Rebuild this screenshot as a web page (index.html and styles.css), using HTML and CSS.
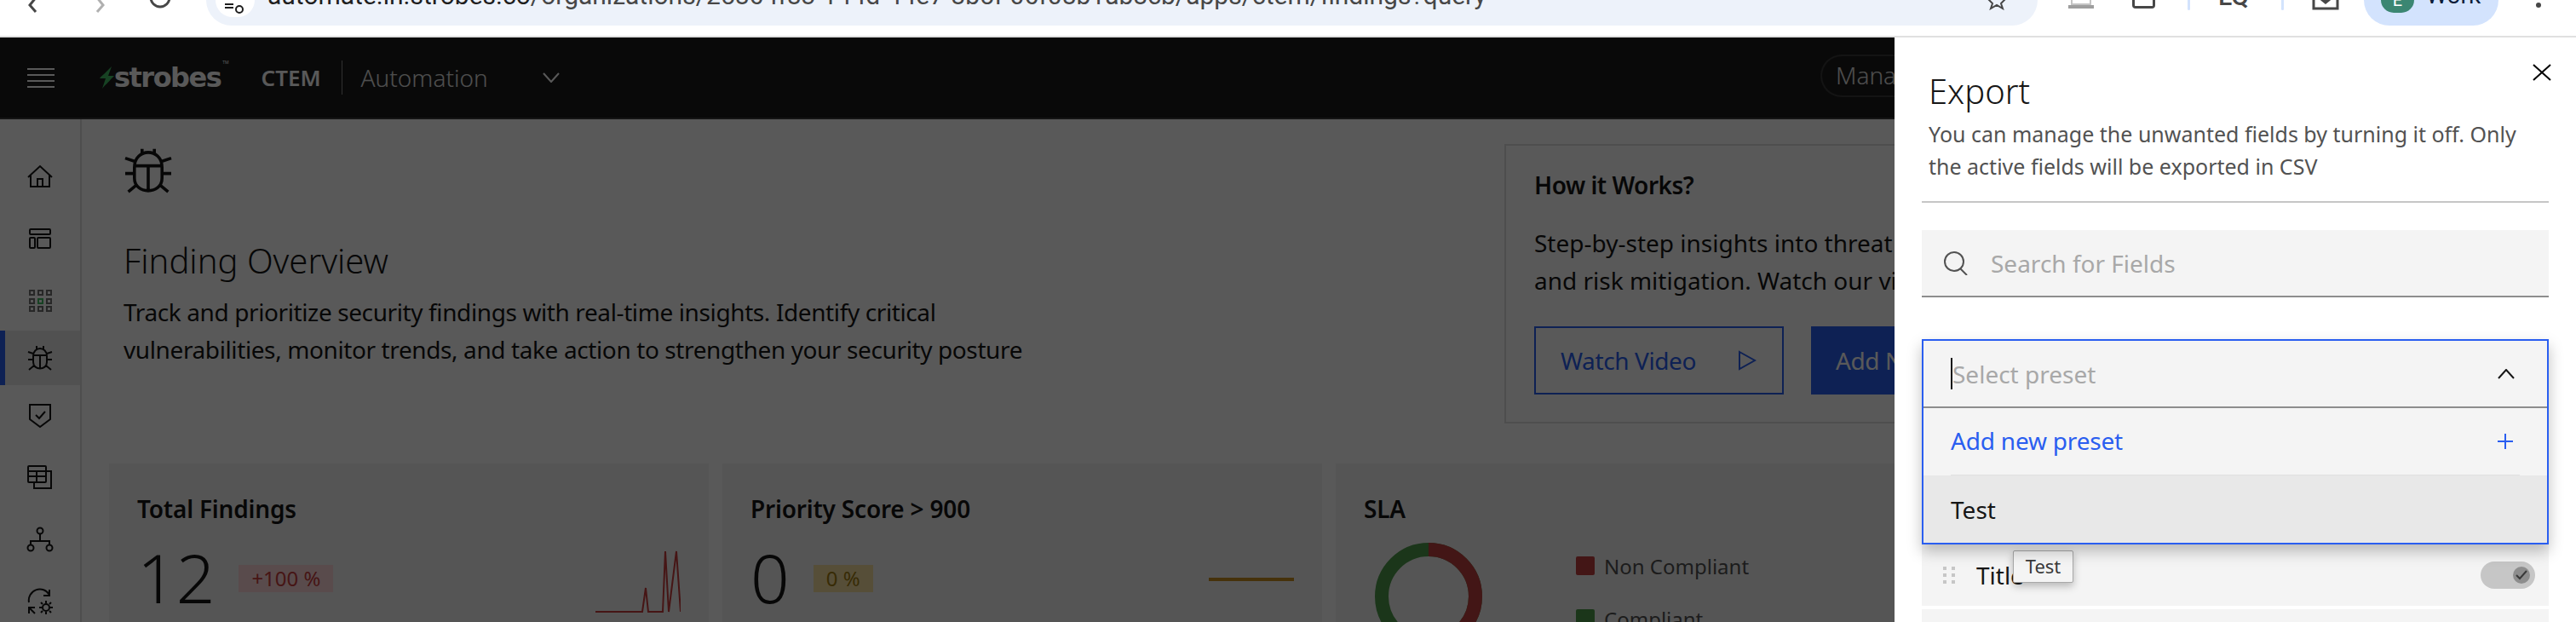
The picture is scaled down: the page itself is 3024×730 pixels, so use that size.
FILE: index.html
```html
<!DOCTYPE html>
<html lang="en">
<head>
  <meta charset="UTF-8" />
  <title>Finding Overview</title>
  <link rel="stylesheet" href="styles.css">
</head>
<body>

  <div class="chrome">
    <svg class="chrome-btn btn-back" width="24" height="20" viewBox="0 0 24 20"><path d="M16 -4 L8 6 L15 14" /></svg>
    <svg class="chrome-btn btn-fwd" width="24" height="20" viewBox="0 0 24 20"><path d="M8 -4 L16 6 L9 14" /></svg>
    <svg class="chrome-btn btn-reload" width="30" height="20" viewBox="0 0 30 20"><path d="M4 -3 A11 11 0 0 0 26 -3" /></svg>
    <div class="omnibox">
      <div class="site-info">
        <svg width="24" height="20" viewBox="0 0 24 20"><path d="M0 5 H10 M0 9 H10" /><circle cx="17" cy="11" r="4" /></svg>
      </div>
      <div class="url">automate.in.strobes.co<span class="url-rest">/organizations/25864f83-144d-44e7-8b5f-06f08b1ab8cb/apps/ctem/findings?query=</span></div>
      <svg class="star" width="22" height="12" viewBox="0 0 22 12"><path d="M11 -10 L14 -1 L21 -1 L16 4 L18 10 L11 6 L4 10 L6 4 L1 -1 L8 -1 Z" /></svg>
    </div>
    <svg class="ext-laptop" width="30" height="10" viewBox="0 0 30 10"><path d="M4 -2 V5 H26 V-2" /><path class="laptop-base" d="M0 8 H30" /></svg>
    <div class="ext-box"></div>
    <div class="ext-sep"></div>
    <div class="ext-text">LQ</div>
    <div class="ext-sep"></div>
    <svg class="ext-dl" width="32" height="13" viewBox="0 0 32 13"><path d="M2 -4 V10 H30 V-4" /><path d="M16 -4 V1 M11 -1 L16 3 L21 -1" /></svg>
    <div class="profile">
      <div class="avatar">E</div>
      <span>Work</span>
    </div>
    <div class="kebab"></div>
  </div>

  <div class="app">
    <header class="topbar">
      <div class="hamburger"><i></i><i></i><i></i><i></i></div>
      <div class="logo">
        <svg width="17" height="26" viewBox="0 0 17 26"><path class="zap" d="M14 0 L5 9 C3 11 1 12 0 14 H7 L3 26 C6 22 11 18 13 15 C15 13 16 12 17 11 H10 Z" /></svg>
        <span class="logo-text">strobes</span><sup class="tm">TM</sup>
      </div>
      <div class="product">CTEM</div>
      <div class="org">Automation</div>
      <svg class="org-chevron" width="20" height="12" viewBox="0 0 20 12"><path d="M1 1 L10 11 L19 1" /></svg>
      <div class="manage">Manage</div>
    </header>

    <div class="body-row">
      <nav class="sidebar">
        <a class="nav-item">
          <svg width="32" height="32" viewBox="0 0 32 32"><path d="M2 17 L16 4 L30 17 M5 15 V28 H27 V15 M13 28 V19 H19 V28" /></svg>
        </a>
        <a class="nav-item">
          <svg width="32" height="32" viewBox="0 0 32 32"><rect x="4" y="5" width="24" height="6" rx="1" /><rect x="4" y="15" width="6" height="12" rx="1" /><rect x="13" y="15" width="15" height="12" rx="1" /></svg>
        </a>
        <a class="nav-item nav-grid">
          <svg width="32" height="32" viewBox="0 0 32 32">
            <rect x="4" y="4" width="5" height="5" /><rect x="14" y="4" width="5" height="5" /><rect x="24" y="4" width="5" height="5" />
            <rect x="4" y="14" width="5" height="5" /><rect class="grid-on" x="14" y="14" width="5" height="5" /><rect x="24" y="14" width="5" height="5" />
            <rect x="4" y="23" width="5" height="5" /><rect x="14" y="23" width="5" height="5" /><rect x="24" y="23" width="5" height="5" />
          </svg>
        </a>
        <a class="nav-item active">
          <svg width="32" height="32" viewBox="0 0 32 32"><path d="M12 6 V2 M20 6 V2 M8 14 C8 2 24 2 24 14 V21 C24 31 8 31 8 21 Z M8 13 H24 M16 13 V28 M8 11 L2 9 M24 11 L30 9 M8 18 H2 M24 18 H30 M9 25 L3 30 M23 25 L29 30" /></svg>
        </a>
        <a class="nav-item nav-tight">
          <svg width="32" height="32" viewBox="0 0 32 32"><path d="M4 4 H28 V21 L16 30 L4 21 Z M11 16 L15 20 L22 12" /></svg>
        </a>
        <a class="nav-item">
          <svg width="32" height="32" viewBox="0 0 32 32"><rect x="2" y="3" width="21" height="19" rx="1" /><path d="M2 9 H23 M2 15 H23 M12 9 V22 M23 9 H29 V29 H9 V22" /></svg>
        </a>
        <a class="nav-item">
          <svg width="32" height="32" viewBox="0 0 32 32"><circle cx="16" cy="6" r="3.5" /><circle cx="5" cy="26" r="3.5" /><circle cx="27" cy="26" r="3.5" /><path d="M16 10 V18 M5 22 V18 H27 V22" /></svg>
        </a>
        <a class="nav-item">
          <svg width="32" height="32" viewBox="0 0 32 32"><path d="M3 17 A13 13 0 0 1 27 8 M27 2 V9 H20 M3 30 L3 23 H10 M3 23 L10 30" /><circle cx="23" cy="23" r="4" /><path d="M23 15 V18 M23 28 V31 M15 23 H18 M28 23 H31 M17 17 L19 19 M27 27 L29 29 M29 17 L27 19 M19 27 L17 29" /></svg>
        </a>
      </nav>

      <main class="content">
        <div class="top-row">
          <section class="intro">
            <svg class="intro-icon" width="58" height="54" viewBox="0 0 32 30"><path d="M12 5 V1 M20 5 V1 M7 13 C7 0 25 0 25 13 V20 C25 31 7 31 7 20 Z M7 12 H25 M16 12 V28 M7 9 L1 7 M25 9 L31 7 M7 17 H1 M25 17 H31 M9 24 L3 29 M23 24 L29 29" /></svg>
            <h1 class="intro-title">Finding Overview</h1>
            <p class="intro-desc">Track and prioritize security findings with real-time insights. Identify critical<br>vulnerabilities, monitor trends, and take action to strengthen your security posture</p>
          </section>
          <section class="how">
            <h3 class="how-title">How it Works?</h3>
            <p class="how-desc">Step-by-step insights into threat detection, prioritization<br>and risk mitigation. Watch our video to learn more</p>
            <div class="how-actions">
              <button class="btn btn-outline">Watch Video
                <svg width="22" height="24" viewBox="0 0 22 24"><path d="M2 2 L20 12 L2 22 Z" /></svg>
              </button>
              <button class="btn btn-solid">Add New Finding</button>
            </div>
          </section>
        </div>

        <div class="cards">
          <div class="card">
            <h4 class="card-title">Total Findings</h4>
            <div class="card-row">
              <span class="big-num">12</span>
              <span class="tag tag-red">+100 %</span>
              <svg class="spark" width="100" height="74" viewBox="0 0 100 74"><polyline class="spark-red" points="0,72 55,72 59,44 62,72 79,72 82,1 86,72 95,1 100,72" /></svg>
            </div>
          </div>
          <div class="card">
            <h4 class="card-title">Priority Score &gt; 900</h4>
            <div class="card-row">
              <span class="big-num">0</span>
              <span class="tag tag-yellow">0 %</span>
              <svg class="spark" width="100" height="74" viewBox="0 0 100 74"><line class="spark-yellow" x1="0" y1="34" x2="100" y2="34" /></svg>
            </div>
          </div>
          <div class="card">
            <h4 class="card-title">SLA</h4>
            <div class="sla">
              <svg class="donut" width="126" height="126" viewBox="0 0 126 126">
                <circle class="donut-green" cx="63" cy="63" r="55" />
                <path class="donut-red" d="M63 8 A55 55 0 0 1 63 118" />
              </svg>
              <div class="legend">
                <div class="legend-row"><i class="swatch swatch-red"></i>Non Compliant</div>
                <div class="legend-row"><i class="swatch swatch-green"></i>Compliant</div>
              </div>
            </div>
          </div>
        </div>
      </main>
    </div>

    <div class="overlay"></div>

    <aside class="drawer">
      <button class="drawer-close">
        <svg width="22" height="20" viewBox="0 0 22 20"><path d="M1 1 L21 19 M21 1 L1 19" /></svg>
      </button>
      <div class="drawer-head">
        <h2 class="drawer-title">Export</h2>
        <p class="drawer-desc">You can manage the unwanted fields by turning it off. Only<br>the active fields will be exported in CSV</p>
      </div>
      <div class="search">
        <svg width="30" height="28" viewBox="0 0 30 28"><circle cx="13" cy="12" r="11" /><path d="M20 20 L28 28" /></svg>
        <span>Search for Fields</span>
      </div>
      <div class="preset">
        <div class="preset-input">
          <span class="caret"></span><span class="preset-ph">Select preset</span>
          <svg width="20" height="12" viewBox="0 0 20 12"><path d="M1 11 L10 1 L19 11" /></svg>
        </div>
        <div class="preset-add">
          <span>Add new preset</span>
          <svg width="18" height="18" viewBox="0 0 18 18"><path d="M9 0 V18 M0 9 H18" /></svg>
        </div>
        <div class="preset-opt">Test</div>
      </div>
      <div class="field">
        <div class="drag"><i></i><i></i><i></i><i></i><i></i><i></i></div>
        <span class="field-name">Title</span>
        <div class="toggle">
          <div class="knob">
            <svg width="14" height="12" viewBox="0 0 14 12"><path d="M1 6 L5 10 L13 1" /></svg>
          </div>
        </div>
        <div class="tooltip">Test</div>
      </div>
      <div class="field"></div>
    </aside>
  </div>

</body>
</html>
```

FILE: styles.css
```css
* {
  box-sizing: border-box;
}

body {
  font-family: 'Noto Sans', sans-serif;
  background: #fff;
  color: #161616;
  margin: 0;
  width: 3024px;
  height: 730px;
  overflow: hidden;
}

h1, h2, h3, h4, p {
  margin: 0;
  font-weight: inherit;
}

svg path, svg rect, svg circle, svg polyline, svg line {
  fill: none;
  stroke: currentColor;
  stroke-width: 2;
}

/* browser bar, top of it is cut off by the capture */
.chrome {
  height: 44px;
  display: flex;
  align-items: flex-start;
  border-bottom: 2px solid #e0e0e0;
  padding-left: 27px;
  overflow: hidden;
}

.chrome-btn {
  flex: none;
  color: #474747;
}

.chrome-btn path {
  stroke-width: 3;
}

.btn-fwd {
  margin-left: 54px;
  color: #b0b0b0;
}

.btn-reload {
  margin-left: 44px;
}

.omnibox {
  flex: none;
  width: 2150px;
  height: 30px;
  margin-left: 39px;
  background: #edf2fa;
  border-radius: 0 0 30px 30px;
  display: flex;
  align-items: flex-start;
  position: relative;
}

.site-info {
  width: 46px;
  height: 20px;
  margin-left: 11px;
  background: #fff;
  border-radius: 0 0 23px 23px;
  padding-left: 11px;
  color: #1f1f1f;
}

.url {
  margin: -23px 0 0 15px;
  font-family: 'Roboto', sans-serif;
  font-size: 30px;
  line-height: 36px;
  color: #1f1f1f;
  white-space: nowrap;
}

.url-rest {
  color: #474747;
}

.star {
  margin-left: auto;
  margin-right: 37px;
  color: #474747;
}

.ext-laptop {
  flex: none;
  margin-left: 36px;
  color: #c4c4c4;
}

.ext-laptop .laptop-base {
  stroke: #9e9e9e;
  stroke-width: 4;
}

.ext-box {
  flex: none;
  width: 27px;
  height: 10px;
  margin-left: 45px;
  border: 3px solid #474747;
  border-top: 0;
  border-radius: 0 0 4px 4px;
}

.ext-sep {
  flex: none;
  width: 3px;
  height: 12px;
  margin-left: 38px;
  background: #d3e3fd;
  border-radius: 0 0 2px 2px;
}

.ext-text {
  flex: none;
  width: 36px;
  margin: -22px 0 0 33px;
  font-family: 'Roboto', sans-serif;
  font-size: 30px;
  font-weight: 500;
  line-height: 36px;
  color: #474747;
}

.ext-dl {
  flex: none;
  margin-left: 33px;
  color: #474747;
}

.ext-dl path {
  stroke-width: 3;
}

.profile {
  flex: none;
  width: 158px;
  height: 30px;
  margin-left: 29px;
  background: #d3e3fd;
  border-radius: 0 0 30px 30px;
  display: flex;
  align-items: flex-start;
  padding-left: 20px;
  font-family: 'Roboto', sans-serif;
  font-size: 28px;
  line-height: 36px;
  color: #0b1d3a;
}

.avatar {
  width: 39px;
  height: 15px;
  background: #3b8672;
  border-radius: 0 0 20px 20px;
  color: #fff;
  font-size: 20px;
  line-height: 0;
  text-align: center;
  margin-right: 14px;
  overflow: hidden;
}

.profile span {
  margin-top: -23px;
}

.kebab {
  flex: none;
  width: 6px;
  height: 6px;
  margin: 3px 0 0 44px;
  background: #474747;
  border-radius: 50%;
}

/* app */
.app {
  position: relative;
  height: 686px;
  overflow: hidden;
}

.topbar {
  height: 96px;
  background: #1c1c1c;
  border-bottom: 2px solid #393939;
  display: flex;
  align-items: center;
  color: #fff;
  padding-left: 32px;
}

.hamburger {
  width: 32px;
  display: flex;
  flex-direction: column;
  gap: 5px;
}

.hamburger i {
  height: 2px;
  background: #fff;
}

.logo {
  display: flex;
  align-items: center;
  margin-left: 53px;
  height: 40px;
}

.logo .zap {
  fill: #42be65;
  stroke: none;
}

.logo-text {
  font-family: 'DejaVu Sans', sans-serif;
  font-size: 32px;
  font-weight: 700;
  letter-spacing: -1.5px;
  line-height: 40px;
}

.tm {
  font-size: 5px;
  align-self: flex-start;
  margin: -2px 0 0 2px;
  line-height: 8px;
}

.product {
  margin-left: 38px;
  width: 95px;
  height: 40px;
  border-right: 1px solid #8d8d8d;
  font-size: 26px;
  font-weight: 600;
  line-height: 40px;
}

.org {
  margin-left: 22px;
  font-size: 28px;
  font-weight: 300;
  color: #e0e0e0;
}

.org-chevron {
  margin-left: 64px;
}

.manage {
  position: absolute;
  left: 2137px;
  top: 20px;
  height: 50px;
  width: 87px;
  border: 2px solid #393939;
  border-right: 0;
  border-radius: 25px 0 0 25px;
  padding-left: 16px;
  font-size: 28px;
  line-height: 44px;
  font-weight: 300;
  color: #e0e0e0;
  overflow: hidden;
  white-space: nowrap;
}

.body-row {
  display: flex;
  height: 590px;
}

.sidebar {
  flex: none;
  width: 96px;
  border-right: 2px solid #e0e0e0;
  padding-top: 35px;
  display: flex;
  flex-direction: column;
  gap: 9px;
}

.nav-item {
  height: 64px;
  flex: none;
  display: flex;
  align-items: center;
  justify-content: center;
  border-left: 6px solid transparent;
  padding-right: 6px;
}

.nav-item.active {
  margin-top: -6px;
  background: #e8e8e8;
  border-left-color: #2a5ef0;
}

.nav-tight {
  margin-top: -6px;
}

.nav-grid svg rect {
  stroke: #6f6f6f;
}

.nav-grid .grid-on {
  stroke: #42be65;
}

.content {
  flex: none;
  width: 2928px;
}

.top-row {
  display: flex;
  align-items: flex-start;
  padding-top: 29px;
}

.intro {
  flex: none;
  width: 1670px;
  padding: 4px 0 0 49px;
}

.intro-icon {
  display: block;
}

.intro-title {
  margin-top: 53px;
  font-size: 40px;
  font-weight: 300;
  line-height: 52px;
}

.intro-desc {
  margin-top: 12px;
  font-size: 28px;
  line-height: 44px;
  letter-spacing: -0.39px;
}

/* runs on under the drawer, so it stops at the drawer edge */
.how {
  flex: none;
  width: 458px;
  height: 328px;
  border: 2px solid #e0e0e0;
  border-right: 0;
  padding: 28px 0 0 33px;
  overflow: hidden;
}

.how-title {
  font-size: 28px;
  font-weight: 600;
  line-height: 36px;
  letter-spacing: -0.5px;
}

.how-desc {
  margin-top: 28px;
  font-size: 28px;
  line-height: 44px;
  white-space: nowrap;
}

.how-actions {
  display: flex;
  gap: 32px;
  margin-top: 32px;
}

.btn {
  flex: none;
  height: 80px;
  font: inherit;
  font-size: 28px;
  letter-spacing: -0.39px;
  background: none;
  display: flex;
  align-items: center;
  padding: 0 30px 0 29px;
}

.btn-outline {
  width: 293px;
  border: 2px solid #2a5ef0;
  color: #2a5ef0;
  justify-content: space-between;
}

.btn-solid {
  width: 300px;
  border: 0;
  background: #2a5ef0;
  color: #fff;
  white-space: nowrap;
}

.cards {
  display: grid;
  grid-template-columns: repeat(4, 704px);
  gap: 16px;
  margin-top: 47px;
  padding-left: 32px;
}

.card {
  height: 260px;
  background: #f4f4f4;
  padding: 34px 33px;
}

.card-title {
  font-size: 28px;
  font-weight: 600;
  line-height: 38px;
  letter-spacing: -0.2px;
}

.card-row {
  display: flex;
  align-items: flex-start;
  margin-top: 17px;
  position: relative;
}

.big-num {
  font-size: 80px;
  font-weight: 300;
  line-height: 88px;
}

.tag {
  height: 32px;
  margin: 30px 0 0 28px;
  padding: 0 15px;
  font-size: 24px;
  line-height: 32px;
}

.tag-red {
  background: #ffd7d9;
  color: #c83c3c;
}

.tag-yellow {
  background: #f5e0a0;
  color: #a07c10;
}

.spark {
  position: absolute;
  right: 0;
  top: 13px;
}

.spark-red {
  stroke: #c83c3c;
}

.spark-yellow {
  stroke: #c89020;
  stroke-width: 4;
}

.sla {
  display: flex;
  margin-top: 21px;
  padding-left: 13px;
}

.donut-green {
  stroke: #4f9a4c;
  stroke-width: 16;
}

.donut-red {
  stroke: #c04040;
  stroke-width: 16;
}

.legend {
  margin: 15px 0 0 110px;
  display: flex;
  flex-direction: column;
  gap: 38px;
}

.legend-row {
  display: flex;
  align-items: center;
  gap: 11px;
  height: 24px;
  font-size: 24px;
  color: #525252;
}

.swatch {
  width: 22px;
  height: 22px;
  border-radius: 2px;
}

.swatch-red {
  background: #c04040;
}

.swatch-green {
  background: #4f9a4c;
}

/* modal */
.overlay {
  position: absolute;
  inset: 0;
  background: rgba(0, 0, 0, 0.65);
}

.drawer {
  position: absolute;
  top: 0;
  right: 0;
  bottom: 0;
  width: 800px;
  background: #fff;
  padding: 0 32px;
}

.drawer-close {
  position: absolute;
  top: 31px;
  right: 29px;
  padding: 0;
  border: 0;
  background: none;
  line-height: 0;
}

.drawer-head {
  height: 194px;
  padding: 37px 0 0 8px;
  border-bottom: 2px solid #c6c6c6;
}

.drawer-title {
  font-size: 40px;
  font-weight: 300;
  line-height: 52px;
}

.drawer-desc {
  margin-top: 5px;
  font-size: 25px;
  line-height: 38px;
  color: #525252;
}

.search {
  height: 79px;
  margin-top: 32px;
  background: #f4f4f4;
  border-bottom: 2px solid #8d8d8d;
  display: flex;
  align-items: center;
  gap: 26px;
  padding-left: 25px;
  font-size: 28px;
  color: #a8a8a8;
}

.search svg {
  color: #525252;
}

.preset {
  margin-top: 49px;
  border: 2px solid #2a5ef0;
  height: 241px;
  position: relative;
  z-index: 2;
  box-shadow: 0 8px 16px rgba(0, 0, 0, 0.25);
  background: #f4f4f4;
}

.preset-input {
  height: 79px;
  border-bottom: 2px solid #8d8d8d;
  display: flex;
  align-items: center;
  padding: 0 38px 0 32px;
  font-size: 28px;
  color: #a8a8a8;
}

.caret {
  width: 2px;
  height: 37px;
  background: #161616;
}

.preset-ph {
  flex: 1;
}

.preset-input svg {
  color: #161616;
}

.preset-add {
  height: 79px;
  margin: 0 32px;
  border-bottom: 1px solid #e0e0e0;
  display: flex;
  align-items: center;
  justify-content: space-between;
  padding-right: 8px;
  font-size: 28px;
  letter-spacing: -0.2px;
  color: #2a5ef0;
}

.preset-add span {
  margin-top: -2px;
}

.preset-opt {
  height: 79px;
  background: #e8e8e8;
  padding-left: 32px;
  font-size: 28px;
  line-height: 81px;
}

.field {
  height: 72px;
  margin-bottom: 4px;
  background: #f4f4f4;
  display: flex;
  align-items: center;
  padding: 0 16px 0 25px;
  position: relative;
}

.drag {
  width: 14px;
  display: grid;
  grid-template-columns: 4px 4px;
  gap: 4px 6px;
}

.drag i {
  height: 4px;
  background: #c6c6c6;
}

.field-name {
  margin-left: 25px;
  font-size: 28px;
  flex: 1;
}

.toggle {
  width: 64px;
  height: 32px;
  border-radius: 16px;
  background: #c6c6c6;
  display: flex;
  justify-content: flex-end;
  align-items: center;
  padding-right: 6px;
}

.knob {
  width: 20px;
  height: 20px;
  border-radius: 50%;
  background: #8d8d8d;
  color: #393939;
  display: flex;
  align-items: center;
  justify-content: center;
}

.tooltip {
  position: absolute;
  left: 107px;
  top: 7px;
  width: 71px;
  height: 38px;
  background: #f4f4f4;
  border: 1px solid #a8a8a8;
  border-radius: 2px;
  box-shadow: 0 4px 10px rgba(0, 0, 0, 0.25);
  font-size: 22px;
  line-height: 34px;
  text-align: center;
  color: #393939;
}
```
